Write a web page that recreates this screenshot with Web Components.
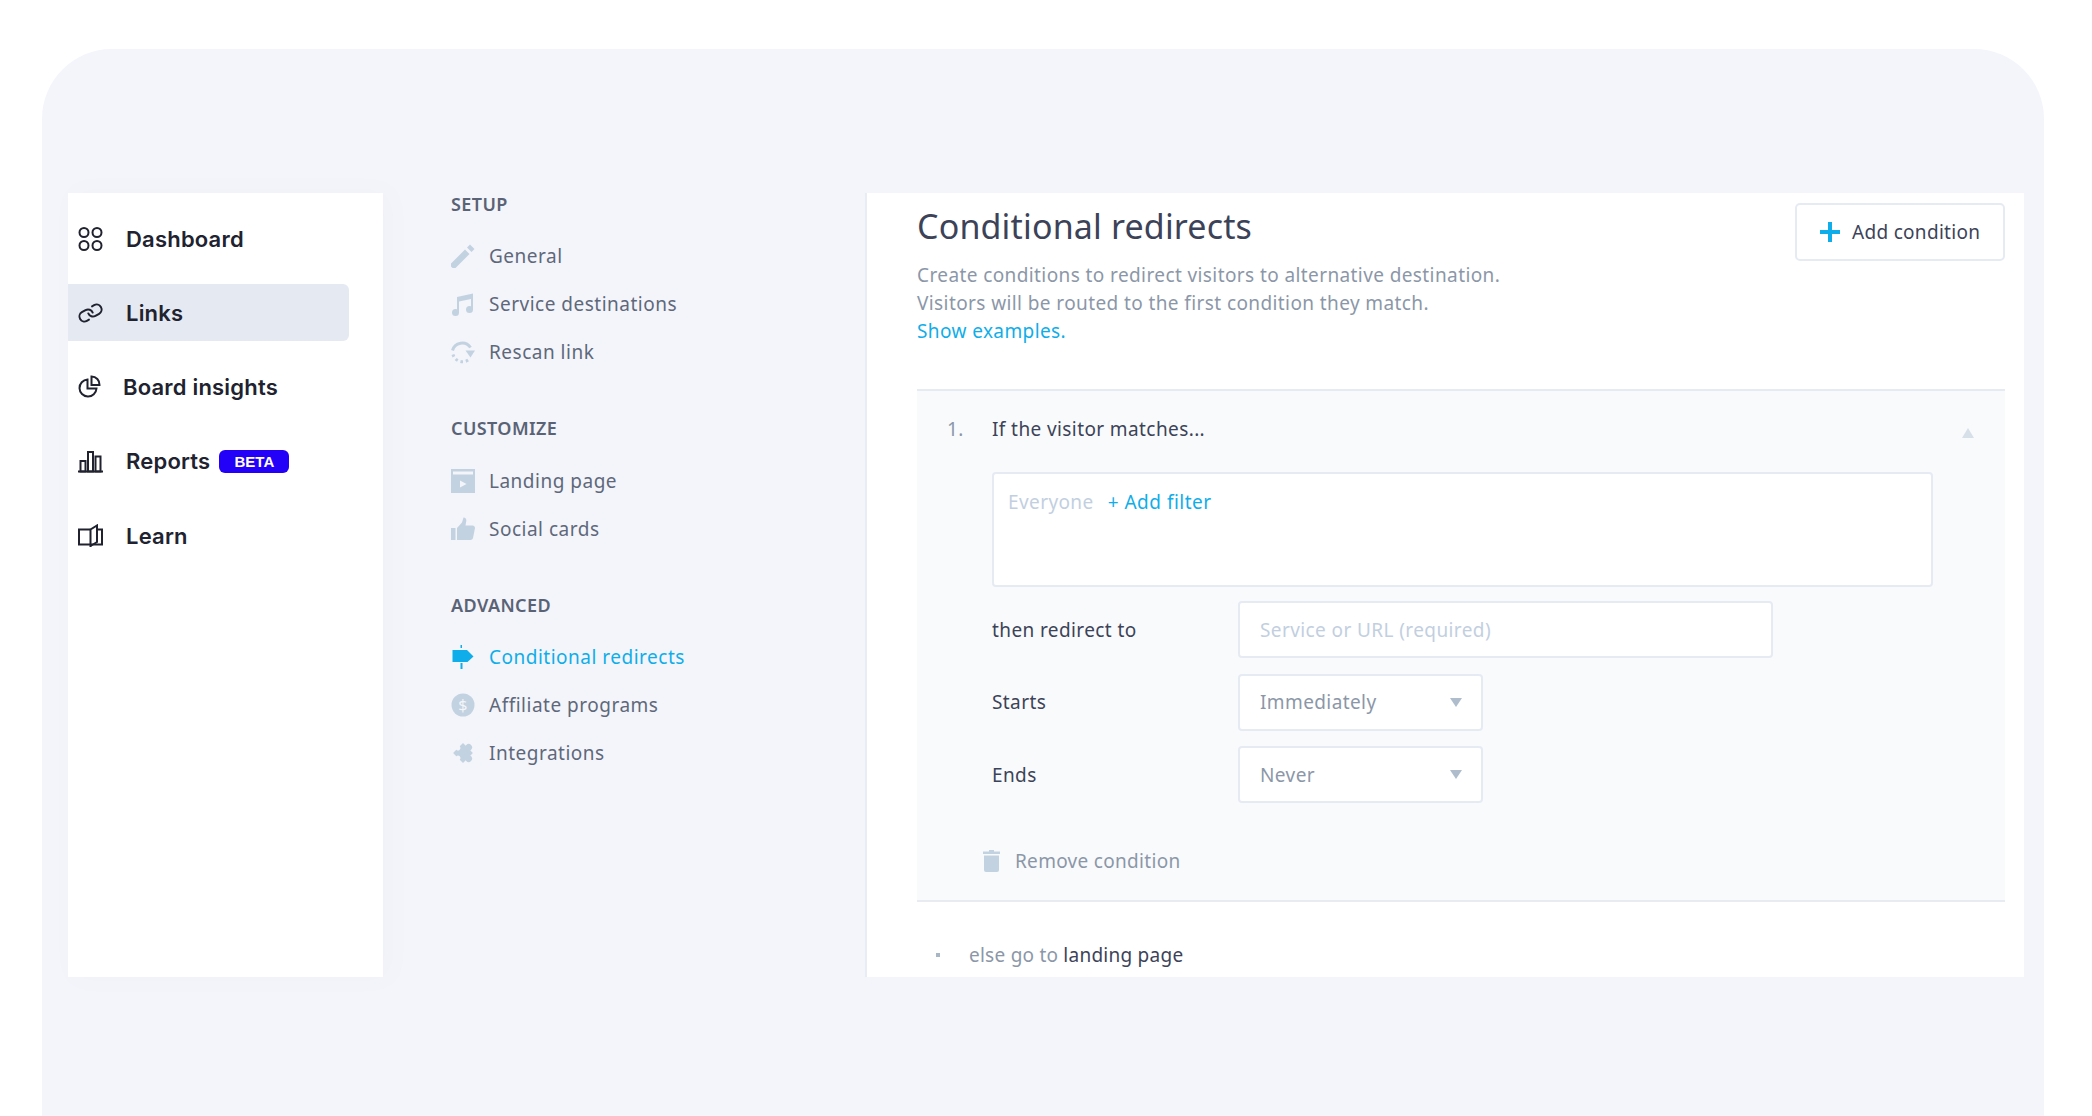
<!DOCTYPE html>
<html lang="en">
<head>
<meta charset="utf-8">
<title>Conditional redirects</title>
<style>
  html, body { margin: 0; height: 100%; background: #fff; overflow: hidden; }
  body { font-family: "Noto Sans", "Liberation Sans", sans-serif; }
</style>
</head>
<body>
<app-frame>
  <side-nav slot="nav">
    <nav-item>
      <svg slot="icon" width="25" height="24" viewBox="0 0 25 24" fill="none" stroke="#20232f" stroke-width="2"><circle cx="6" cy="5.500" r="4.500"/><circle cx="19" cy="5.500" r="4.500"/><circle cx="6" cy="18.500" r="4.500"/><circle cx="19" cy="18.500" r="4.500"/></svg>
      Dashboard
    </nav-item>
    <nav-item active>
      <svg slot="icon" width="25" height="24" viewBox="0 0 24 24" fill="none" stroke="#20232f" stroke-width="2" stroke-linecap="round"><g transform="rotate(15 12 12)"><path d="M10 13a5 5 0 0 0 7.540.540l3-3a5 5 0 0 0-7.070-7.070l-1.720 1.710"/><path d="M14 11a5 5 0 0 0-7.540-.540l-3 3a5 5 0 0 0 7.070 7.070l1.710-1.710"/></g></svg>
      Links
    </nav-item>
    <nav-item style="--text-gap: 20px">
      <svg slot="icon" width="25" height="24" viewBox="0 0 25 24" fill="none" stroke="#20232f" stroke-width="2"><path d="M9.500 4.500a8.500 8.500 0 1 0 9 9h-9z"/><path d="M13.500 1.500a8 8 0 0 1 8 8.500h-8z"/></svg>
      Board insights
    </nav-item>
    <nav-item>
      <svg slot="icon" width="25" height="24" viewBox="0 0 25 24" fill="none" stroke="#20232f" stroke-width="2"><path d="M0 22.500h25"/><rect x="2.500" y="12" width="5" height="10.500"/><rect x="10" y="3" width="5" height="19.500"/><rect x="17.500" y="7.500" width="5" height="15"/></svg>
      Reports
      <beta-badge>BETA</beta-badge>
    </nav-item>
    <nav-item>
      <svg slot="icon" width="25" height="24" viewBox="0 0 25 24" fill="none" stroke="#20232f" stroke-width="2"><path d="M12.500 5.500H1v15h11.500"/><path d="M12.500 23V5.500L19 1.500V18l-6.500 4"/><path d="M19 5.500h5v15H12.500"/></svg>
      Learn
    </nav-item>
  </side-nav>

  <settings-menu slot="menu">
    <menu-group heading="SETUP">
      <menu-link>
        <svg slot="icon" width="24" height="24" viewBox="0 0 24 24" fill="#c3d2e0"><path d="M0 19.500 14 5.500 18.500 10 4.500 24H1.500L0 22.500zM16 3.500 19 .5 23.500 5 20.500 8z"/></svg>
        General
      </menu-link>
      <menu-link>
        <svg slot="icon" width="24" height="24" viewBox="0 0 24 24" fill="#c3d2e0"><path d="M6 5 22 1.500V18h-2V7L8 9.500V21H6z"/><circle cx="4.500" cy="20.500" r="3.500"/><circle cx="18.500" cy="17.500" r="3.500"/></svg>
        Service destinations
      </menu-link>
      <menu-link>
        <svg slot="icon" width="24" height="24" viewBox="0 0 24 24" fill="none" stroke="#c3d2e0" stroke-width="3"><path d="M1.500 10.500A10 10 0 0 1 19.500 7.500"/><path d="M2 14.500A10 10 0 0 0 18.500 19" stroke-dasharray="2.500 2.800"/><path d="M14.500 10.500h9.500l-4.500 7z" fill="#c3d2e0" stroke="none"/></svg>
        Rescan link
      </menu-link>
    </menu-group>
    <menu-group heading="CUSTOMIZE">
      <menu-link>
        <svg slot="icon" width="24" height="24" viewBox="0 0 24 24" fill="#c3d2e0"><path d="M0 0h24v24H0zM2 2.500v3h20v-3z" fill-rule="evenodd"/><path d="M9 11.500l6.500 3.500L9 18.500z" fill="#f3f5fa"/></svg>
        Landing page
      </menu-link>
      <menu-link>
        <svg slot="icon" width="24" height="24" viewBox="0 0 24 24" fill="#c3d2e0"><path d="M0 11h4.500v12H0zM6 11l5-5.500L12.500.5c2 0 3 1.500 2.800 3.500L14.500 8.500h7c1.500 0 2.500 1 2.500 2.500L22 21c-.3 1.300-1.300 2-2.500 2H6z"/></svg>
        Social cards
      </menu-link>
    </menu-group>
    <menu-group heading="ADVANCED">
      <menu-link active>
        <svg slot="icon" width="24" height="24" viewBox="0 0 24 24" fill="#0fade9"><path d="M1.500 5H16l6.500 6.500-6 5.500h-15z"/><path d="M9.500 0h1.500v3H9.500zM9.500 18h2v6h-2z"/></svg>
        Conditional redirects
      </menu-link>
      <menu-link>
        <svg slot="icon" width="24" height="24" viewBox="0 0 24 24"><circle cx="12" cy="12" r="11.500" fill="#c3d2e0"/><text x="12" y="17.500" text-anchor="middle" font-family="Noto Sans, sans-serif" font-size="16" fill="#f3f5fa">$</text></svg>
        Affiliate programs
      </menu-link>
      <menu-link>
        <svg slot="icon" width="24" height="24" viewBox="0 0 24 24" fill="#c3d2e0"><g transform="rotate(45 12 12)"><rect x="5" y="5" width="14" height="14"/><circle cx="12" cy="4" r="3.400"/><circle cx="20" cy="12" r="3.400"/><circle cx="5" cy="12" r="2.400" fill="#f3f5fa"/><circle cx="12" cy="19" r="2.400" fill="#f3f5fa"/></g></svg>
        Integrations
      </menu-link>
    </menu-group>
  </settings-menu>

  <redirect-panel slot="main">
    <condition-card number="1." title-text="If the visitor matches...">
      <filter-box></filter-box>
      <form-row label="then redirect to"><text-field placeholder="Service or URL (required)"></text-field></form-row>
      <form-row label="Starts"><select-box>Immediately</select-box></form-row>
      <form-row label="Ends"><select-box>Never</select-box></form-row>
    </condition-card>
    <else-line></else-line>
  </redirect-panel>
</app-frame>

<script>
// small helper so each class only has to give its markup
function shadow(el, html) {
  el.attachShadow({ mode: "open" }).innerHTML = html;
}

class AppFrame extends HTMLElement {
  constructor() {
    super();
    shadow(this, `
      <style>
        :host { display: block; box-sizing: border-box; width: 2002px; height: 1067px; margin: 49px 0 0 42px; padding: 144px 20px 0 26px; background: #f3f5fa; border-radius: 70px 70px 0 0; }
        .cols { display: flex; height: 784px; }
      </style>
      <div class="cols"><slot name="nav"></slot><slot name="menu"></slot><slot name="main"></slot></div>`);
  }
}

class SideNav extends HTMLElement {
  constructor() {
    super();
    shadow(this, `
      <style>
        :host { display: flex; flex-direction: column; gap: 17.250px; box-sizing: border-box; width: 315px; padding-top: 17px; background: #fff; box-shadow: 6px 0 24px rgba(120, 135, 180, .03); }
      </style>
      <slot></slot>`);
  }
}

class NavItem extends HTMLElement {
  constructor() {
    super();
    shadow(this, `
      <style>
        :host { display: flex; align-items: center; box-sizing: border-box; width: 281px; height: 57px; padding-left: 10px; border-radius: 0 6px 6px 0; font: 600 22px/28px Inter, "Liberation Sans", sans-serif; letter-spacing: .2px; color: #20232f; }
        :host([active]) { background: #e5e9f2; }
        .icon { display: flex; width: 25px; margin-right: var(--text-gap, 23px); }
      </style>
      <span class="icon"><slot name="icon"></slot></span><slot></slot>`);
  }
}

class BetaBadge extends HTMLElement {
  constructor() {
    super();
    shadow(this, `
      <style>
        :host { display: block; width: 70px; height: 23px; margin-left: 9px; border-radius: 6px; background: #2300f8; color: #fff; font: 600 15px/23px "Liberation Sans", sans-serif; letter-spacing: 0; text-align: center; }
      </style>
      <slot></slot>`);
  }
}

class SettingsMenu extends HTMLElement {
  constructor() {
    super();
    shadow(this, `
      <style>
        :host { display: flex; flex-direction: column; gap: 41.500px; box-sizing: border-box; width: 482px; padding-left: 68px; }
      </style>
      <slot></slot>`);
  }
}

class MenuGroup extends HTMLElement {
  connectedCallback() {
    shadow(this, `
      <style>
        :host { display: block; }
        h3 { margin: 0 0 16.500px; font: 600 18px/23px "Noto Sans", sans-serif; letter-spacing: .4px; color: #5a6275; }
      </style>
      <h3>${this.getAttribute("heading")}</h3><slot></slot>`);
  }
}

class MenuLink extends HTMLElement {
  constructor() {
    super();
    shadow(this, `
      <style>
        :host { display: flex; align-items: center; height: 47.800px; font: 400 19px/28px "Noto Sans", sans-serif; letter-spacing: .5px; color: #5f687b; }
        :host([active]) { color: #0fade9; }
        .icon { display: flex; width: 24px; margin-right: 14px; }
      </style>
      <span class="icon"><slot name="icon"></slot></span><slot></slot>`);
  }
}

class RedirectPanel extends HTMLElement {
  constructor() {
    super();
    shadow(this, `
      <style>
        :host { display: block; box-sizing: border-box; width: 1159px; padding: 10px 19px 0 50px; background: #fff; border-left: 2px solid #e8ecf4; font: 400 19px/28.200px "Noto Sans", sans-serif; letter-spacing: .4px; overflow: hidden; }
        header { display: flex; justify-content: space-between; align-items: flex-start; margin-bottom: 43px; }
        h1 { margin: 0 0 10px; font: 400 34px/47px "Noto Sans", sans-serif; letter-spacing: .16px; color: #3c4358; }
        p { margin: 0; padding-top: 1px; color: #8b97a8; }
        a { color: #0fade9; display: block; }
        button { display: flex; align-items: center; box-sizing: border-box; width: 210px; height: 58px; padding: 0 0 0 23px; border: 2px solid #e6eaf3; border-radius: 5px; background: #fff; font: inherit; letter-spacing: .3px; color: #3c4358; }
        svg { margin-right: 12px; }
      </style>
      <header>
        <div>
          <h1>Conditional redirects</h1>
          <p>Create conditions to redirect visitors to alternative destination.<br>Visitors will be routed to the first condition they match.</p>
          <a>Show examples.</a>
        </div>
        <button><svg width="20" height="20" viewBox="0 0 20 20"><path d="M8 0h4v8h8v4h-8v8H8v-8H0V8h8z" fill="#0fade9"/></svg>Add condition</button>
      </header>
      <slot></slot>`);
  }
}

class ConditionCard extends HTMLElement {
  connectedCallback() {
    shadow(this, `
      <style>
        :host { display: block; box-sizing: border-box; padding: 24px 31px 25px 30px; background: #f9fafc; border-top: 2px solid #e6eaf3; border-bottom: 2px solid #e9ebf3; font: 400 19px/28px "Noto Sans", sans-serif; }
        .top { display: flex; align-items: center; margin-bottom: 29px; color: #3c4358; }
        .num { width: 45px; color: #8b97a8; }
        .tri { width: 0; height: 0; margin: 9px 0 0 auto; border: 6px solid transparent; border-top: 0; border-bottom: 10px solid #d7dfe9; }
        .body { display: flex; flex-direction: column; gap: 15.500px; margin-left: 45px; }
        .remove { display: flex; align-items: center; margin: 43.500px 0 0 36px; color: #8b97a8; letter-spacing: .3px; }
        .remove svg { margin-right: 15px; }
      </style>
      <div class="top"><span class="num">${this.getAttribute("number")}</span><span>${this.getAttribute("title-text")}</span><span class="tri"></span></div>
      <div class="body"><slot></slot></div>
      <div class="remove">
        <svg width="17" height="22" viewBox="0 0 17 22" fill="#c3d2e0"><path d="M6 0h5v1.500h6V4H0V1.500h6zM1 5.500h15V20a2 2 0 0 1-2 2H3a2 2 0 0 1-2-2z"/></svg>
        Remove condition
      </div>`);
  }
}

class FilterBox extends HTMLElement {
  constructor() {
    super();
    shadow(this, `
      <style>
        :host { display: block; box-sizing: border-box; width: 941px; height: 115px; margin-bottom: -1px; padding: 14px 14px; background: #fff; border: 2px solid #e6eaf3; border-radius: 4px; }
        .none { color: #c2cfdf; margin-right: 14px; }
        .add { color: #0fade9; letter-spacing: .5px; }
      </style>
      <span class="none">Everyone</span><span class="add">+ Add filter</span>`);
  }
}

class FormRow extends HTMLElement {
  connectedCallback() {
    shadow(this, `
      <style>
        :host { display: flex; align-items: center; color: #3c4358; }
        .label { width: 246px; }
      </style>
      <span class="label">${this.getAttribute("label")}</span><slot></slot>`);
  }
}

class TextField extends HTMLElement {
  connectedCallback() {
    shadow(this, `
      <style>
        :host { display: flex; align-items: center; box-sizing: border-box; width: 535px; height: 57px; padding-left: 20px; background: #fff; border: 2px solid #e6eaf3; border-radius: 4px; color: #c2cfdf; }
      </style>
      ${this.getAttribute("placeholder")}`);
  }
}

class SelectBox extends HTMLElement {
  constructor() {
    super();
    shadow(this, `
      <style>
        :host { display: flex; align-items: center; justify-content: space-between; box-sizing: border-box; width: 245px; height: 57px; padding: 0 19px 0 20px; background: #fff; border: 2px solid #e6eaf3; border-radius: 4px; color: #8b97a8; }
        .arrow { width: 0; height: 0; border: 6px solid transparent; border-bottom: 0; border-top: 9px solid #aebccc; }
      </style>
      <span><slot></slot></span><span class="arrow"></span>`);
  }
}

class ElseLine extends HTMLElement {
  constructor() {
    super();
    shadow(this, `
      <style>
        :host { display: flex; align-items: center; margin-top: 39px; padding-left: 19px; font: 400 19px/28px "Noto Sans", sans-serif; letter-spacing: .25px; color: #8b97a8; }
        i { width: 4px; height: 4px; margin-right: 29px; background: #a9b6c6; }
        b { margin-left: 5px; font-weight: 400; color: #3c4358; }
      </style>
      <i></i>else go to<b>landing page</b>`);
  }
}

customElements.define("app-frame", AppFrame);
customElements.define("side-nav", SideNav);
customElements.define("nav-item", NavItem);
customElements.define("beta-badge", BetaBadge);
customElements.define("settings-menu", SettingsMenu);
customElements.define("menu-group", MenuGroup);
customElements.define("menu-link", MenuLink);
customElements.define("redirect-panel", RedirectPanel);
customElements.define("condition-card", ConditionCard);
customElements.define("filter-box", FilterBox);
customElements.define("form-row", FormRow);
customElements.define("text-field", TextField);
customElements.define("select-box", SelectBox);
customElements.define("else-line", ElseLine);
</script>
</body>
</html>
